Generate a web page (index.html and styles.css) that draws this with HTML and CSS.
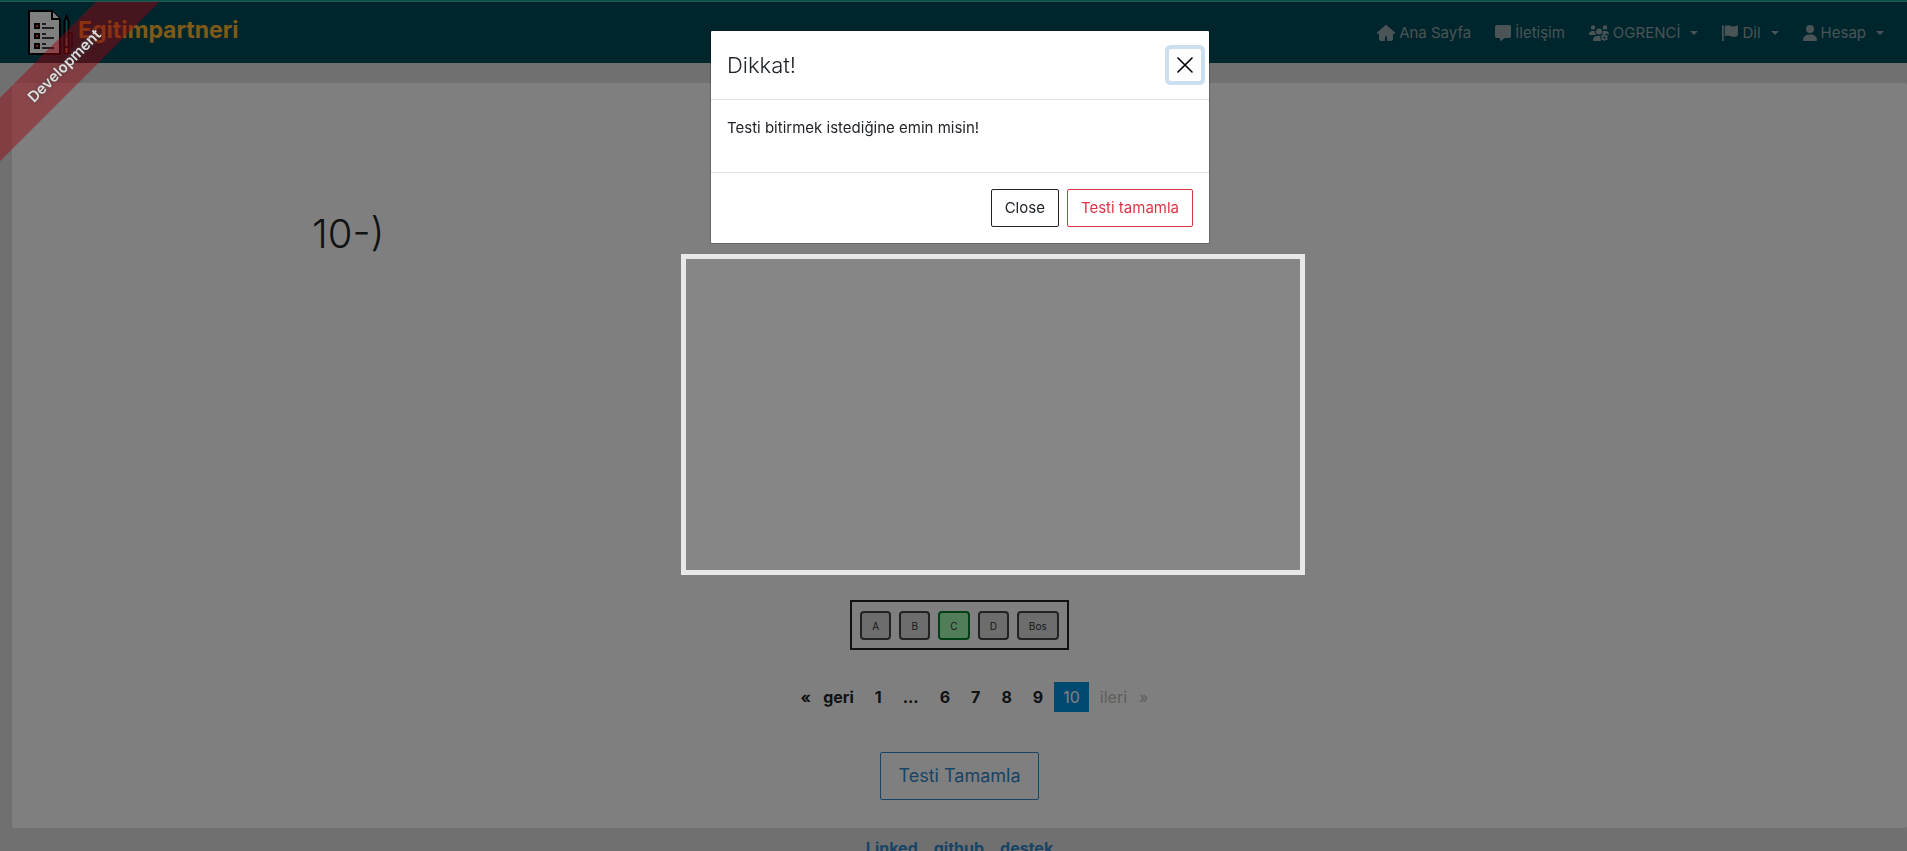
FILE: index.html
```html
<!DOCTYPE html>
<html lang="tr">
<head>
<meta charset="utf-8">
<title>Egitimpartneri</title>
<link rel="stylesheet" href="styles.css">
</head>
<body>
<header class="navbar">
  <a class="brand" href="#">
    <svg class="brand-logo" viewBox="0 0 45 46" aria-hidden="true">
      <path d="M1 1H24L32 9V44H1Z" fill="#fff" stroke="#000" stroke-width="2"/>
      <path d="M24 1V9H32" fill="#fff" stroke="#000" stroke-width="2"/>
      <g fill="#e0561c" stroke="#000" stroke-width="2"><path d="M7 14h4v4H7zM7 24h4v4H7zM7 34h4v4H7z"/></g>
      <path d="M14 14h4M14 18h12M14 24h4M14 28h12M14 34h4M14 38h12" stroke="#000" stroke-width="1.5"/>
      <path d="M36.500 11L38.500 6L40.500 11V43H36.500Z" fill="#168c9c" stroke="#000" stroke-width="2"/>
      <path d="M37.500 28h2v10h-2z" fill="#8a8f98"/><path d="M37.500 38h2v5h-2z" fill="#f09030"/>
      <path d="M36 37h5M41 23h3v14" fill="none" stroke="#000" stroke-width="1.300"/>
    </svg>
    <span>Egitimpartneri</span>
  </a>
  <nav class="menu">
    <a href="#"><svg class="icon icon-home" viewBox="0 0 576 512" aria-hidden="true"><path d="M575.800 255.500c0 18-15 32.100-32 32.100h-32l.7 160.200c0 35-28 64.200-64 64.200H352c-18 0-32-14-32-32v-88c0-18-14-32-32-32s-32 14-32 32v88c0 18-14 32-32 32H128c-36 0-64-28-64-64V287.600H32c-18 0-32-14-32-32 0-9 3-17 10-24L266.400 8c7-7 15-8 22-8s15 2 21 7l255.400 224.500c8 7 12 15 11 24z"/></svg>Ana Sayfa</a>
    <a href="#"><svg class="icon" viewBox="0 0 512 512" aria-hidden="true"><path d="M64 0C28.700 0 0 28.700 0 64v288c0 35.300 28.700 64 64 64h96v80c0 14 15 20 26 12l124-92h138c35.300 0 64-28.700 64-64V64c0-35.300-28.700-64-64-64z"/></svg>İletişim</a>
    <a class="has-caret" href="#"><svg class="icon icon-group" viewBox="0 0 640 512" aria-hidden="true"><circle cx="128" cy="76" r="70"/><circle cx="512" cy="76" r="70"/><circle cx="320" cy="208" r="96"/><path d="M0 298c0-60 45-106 104-106h52c16 0 30 4 44 10-8 46 8 90 36 118H22c-14 0-22-10-22-22zM404 320c28-28 44-72 36-118 14-6 28-10 44-10h52c60 0 104 46 104 106 0 4 0 8-3 12-60-40-90-40-120-20-30-12-70 0-90 30zM128 485c0-74 54-133 128-133h120c-24 40-20 64 0 92-12 30 0 50 20 68H155c-15 0-27-12-27-27z"/><path fill-rule="evenodd" d="M474 288h44l8 34 24 14 34-10 22 38-26 24v28l26 24-22 38-34-10-24 14-8 30h-44l-8-30-24-14-34 10-22-38 26-24v-28l-26-24 22-38 34 10 24-14zM496 366a36 36 0 1 0 .1 0z"/></svg>OGRENCİ</a>
    <a class="has-caret" href="#"><svg class="icon" viewBox="0 0 512 512" aria-hidden="true"><path d="M0 24C0 8 12 0 28 0s28 12 28 26v486H0zM88 34c90-40 150-28 220 4 60 22 110 10 160-20 20-12 44 0 44 20v282c0 12-8 22-20 28-80 38-140 36-210 8-70-26-130-20-194 2z"/></svg>Dil</a>
    <a class="has-caret" href="#"><svg class="icon icon-user" viewBox="0 0 448 512" aria-hidden="true"><circle cx="224" cy="128" r="128"/><path d="M0 482c0-98 80-178 178-178h92c98 0 178 80 178 178 0 16-14 30-30 30H30c-16 0-30-14-30-30z"/></svg>Hesap</a>
  </nav>
</header>

<main class="card">
  <section class="question">
    <h1 class="question-number">10-)</h1>
    <div class="question-frame"></div>
  </section>
  <div class="options">
    <button type="button">A</button>
    <button type="button">B</button>
    <button type="button" class="selected">C</button>
    <button type="button">D</button>
    <button type="button">Bos</button>
  </div>
  <nav class="pagination" aria-label="Sorular">
    <a class="previous" href="#"><span>«</span>geri</a>
    <a href="#">1</a>
    <span class="ellipsis">...</span>
    <a href="#">6</a>
    <a href="#">7</a>
    <a href="#">8</a>
    <a href="#">9</a>
    <span class="current">10</span>
    <span class="disabled"><span>ileri</span>»</span>
  </nav>
  <button type="button" class="btn btn-finish">Testi Tamamla</button>
</main>

<footer class="footer">
  <a href="#">Linked</a>
  <a href="#">github</a>
  <a href="#">destek</a>
</footer>

<div class="backdrop"></div>
<div class="ribbon-area"><span class="ribbon">Development</span></div>

<div class="modal-layer">
  <div class="modal" role="dialog" aria-labelledby="modal-title">
    <div class="modal-header">
      <h2 id="modal-title">Dikkat!</h2>
      <button type="button" class="btn-close" aria-label="Kapat"><svg viewBox="0 0 16 16" aria-hidden="true"><path d="M1 1L15 15M15 1L1 15" stroke="#000" stroke-width="1.600" stroke-linecap="round"/></svg></button>
    </div>
    <div class="modal-body"><p>Testi bitirmek istediğine emin misin!</p></div>
    <div class="modal-footer">
      <button type="button" class="btn btn-dark">Close</button>
      <button type="button" class="btn btn-danger">Testi tamamla</button>
    </div>
  </div>
</div>
</body>
</html>
```
FILE: styles.css
```css
* { box-sizing: border-box; }

body {
  margin: 0;
  background: #e0e0e0;
  color: #212529;
  font: 400 15px/24px Inter, "Liberation Sans", sans-serif;
}

a { text-decoration: none; }
h1, h2, p { margin: 0; font-weight: 400; }
button { font: inherit; cursor: pointer; }

.navbar {
  display: flex;
  justify-content: space-between;
  align-items: center;
  height: 63px;
  padding: 1px 23px 0 28px;
  border-top: 1px solid #00a693;
  box-shadow: inset 0 1px #66a3a3;
  background: #004c5a;
}

.brand {
  display: flex;
  gap: 5px;
  color: #ffb52e;
  font-size: 23px;
  font-weight: 700;
  line-height: 40px;
}
.brand-logo { width: 45px; height: 46px; }

.menu { display: flex; gap: 24px; }
.menu a {
  display: flex;
  align-items: center;
  gap: 4px;
  color: #94a6aa;
}
.icon { width: 16px; height: 16px; fill: currentColor; }
.icon-home { width: 18px; }
.icon-group { width: 20px; }
.icon-user { width: 14px; }
.has-caret::after {
  content: "";
  margin-left: 6px;
  border-top: 4px solid;
  border-left: 4px solid transparent;
  border-right: 4px solid transparent;
}

.card {
  display: flex;
  flex-direction: column;
  align-items: center;
  margin: 20px 0 0 12px;
  padding: 130px 0 28px;
  border-radius: 3px;
  background: #fff;
}

.question {
  display: grid;
  grid-template-columns: 300px 369px 624px;
  align-self: stretch;
}
.question-number { grid-column: 2; font-size: 40px; font-weight: 300; line-height: 42px; }
.question-frame {
  position: relative;
  z-index: 2;
  grid-column: 3;
  height: 321px;
  margin-top: 41px;
  border: 5px solid #e8e8e8;
  background: #868686;
}

.options {
  display: flex;
  gap: 8px;
  margin-top: 25px;
  padding: 9px 8px 8px;
  border: 2px solid #222;
}
.options button {
  min-width: 31px;
  height: 29px;
  padding: 0 10px;
  border: 2px solid #444;
  border-radius: 4px;
  background: #dadada;
  color: #333;
  font-size: 10px;
  line-height: 20px;
}
.options .selected { border-color: #00802c; background: #a4fab2; }

.pagination {
  display: flex;
  gap: 1px;
  margin-top: 32px;
  padding-left: 30px;
  font-size: 16px;
  font-weight: 700;
  line-height: 30px;
}
.pagination > a, .ellipsis { padding: 0 10px; color: #212529; }
.pagination .previous, .disabled { display: flex; gap: 12px; }
.pagination .current { padding: 0 9px; background: #0094e4; color: #fff; font-weight: 400; }
.pagination .disabled { padding: 0 10px; color: #bababa; font-weight: 400; }

.btn {
  padding: 6px 13px;
  border: 1px solid;
  border-radius: 2px;
  background: transparent;
}
.btn-finish {
  margin-top: 40px;
  padding: 8px 17px;
  color: #3088cc;
  font-size: 18px;
  line-height: 30px;
}
.btn-dark { color: #212529; }
.btn-danger { color: #dc3545; }

.footer {
  display: flex;
  justify-content: center;
  gap: 16px;
  padding: 8px 0 8px 12px;
  font-size: 16px;
  font-weight: 700;
}
.footer a { color: #3088cc; }

.backdrop { position: fixed; inset: 0; z-index: 1; background: rgba(0, 0, 0, .5); }

.ribbon-area {
  position: absolute;
  top: 2px;
  left: 0;
  z-index: 3;
  width: 170px;
  height: 170px;
  overflow: hidden;
}
.ribbon {
  position: absolute;
  top: 41px;
  left: -56px;
  width: 240px;
  background: rgba(155, 2, 14, .45);
  color: #dedede;
  font-weight: 600;
  line-height: 45px;
  text-align: center;
  text-shadow: 0 0 4px #444;
  transform: rotate(-45deg);
}

.modal-layer {
  position: fixed;
  inset: 0;
  z-index: 4;
  display: flex;
  justify-content: center;
  align-items: flex-start;
  padding: 30px 0 0 13px;
}
.modal {
  width: 500px;
  border: 1px solid rgba(0, 0, 0, .2);
  border-radius: 2px;
  background: #fff;
  background-clip: padding-box;
}
.modal-header {
  display: flex;
  justify-content: space-between;
  align-items: center;
  padding: 16px 8px;
  border-bottom: 1px solid #dee2e6;
}
.modal-header h2 { padding-left: 8px; font-size: 22px; line-height: 36px; font-weight: 300; }
.btn-close {
  display: grid;
  place-items: center;
  width: 32px;
  height: 32px;
  padding: 0;
  border: 0;
  border-radius: 2px;
  background: #fff;
  box-shadow: 0 0 0 4px #cbdff0;
}
.btn-close svg { width: 16px; height: 16px; }
.modal-body { padding: 16px 16px 32px; }
.modal-footer {
  display: flex;
  justify-content: flex-end;
  gap: 8px;
  padding: 16px;
  border-top: 1px solid #dee2e6;
}
```
